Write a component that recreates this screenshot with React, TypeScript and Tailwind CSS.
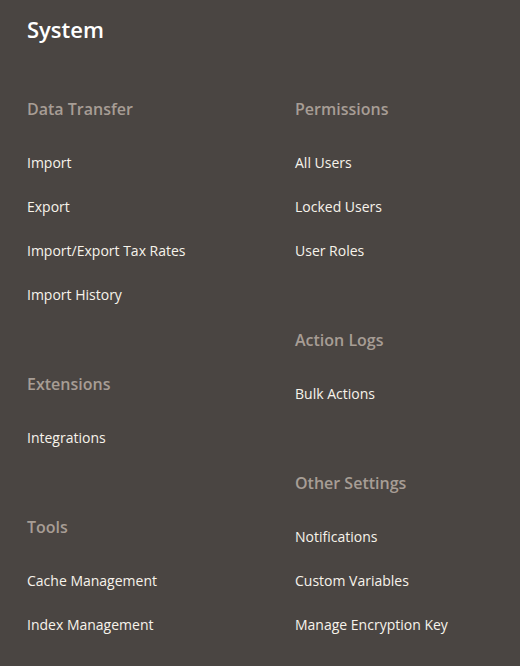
const left = [
  { title: "Data Transfer", items: ["Import", "Export", "Import/Export Tax Rates", "Import History"] },
  { title: "Extensions", items: ["Integrations"] },
  { title: "Tools", items: ["Cache Management", "Index Management"] },
];

const right = [
  { title: "Permissions", items: ["All Users", "Locked Users", "User Roles"] },
  { title: "Action Logs", items: ["Bulk Actions"] },
  { title: "Other Settings", items: ["Notifications", "Custom Variables", "Manage Encryption Key"] },
];

type Section = { title: string; items: string[] };

const Column = ({ sections }: { sections: Section[] }) => (
  <div className="flex flex-col gap-[57px]">
    {sections.map((s) => (
      <div key={s.title}>
        <div className="h-[22px] leading-[22px] text-[16px] font-semibold text-[#a79d95] mb-[20px]">{s.title}</div>
        <ul>
          {s.items.map((item) => (
            <li key={item} className="h-[44px] flex items-center">
              <a className="text-[14px] font-medium text-[#f7f3eb]">{item}</a>
            </li>
          ))}
        </ul>
      </div>
    ))}
  </div>
);

export default function App() {
  return (
    <div
      className="w-[520px] h-[666px] bg-[#4a4542] pl-[27px] pt-[14px] overflow-hidden"
      style={{ fontFamily: '"Open Sans", sans-serif' }}
    >
      <h1 className="h-[30px] leading-[30px] text-[22px] font-semibold text-white">System</h1>
      <div className="mt-[54px] grid grid-cols-[268px_1fr]">
        <Column sections={left} />
        <Column sections={right} />
      </div>
    </div>
  );
}
